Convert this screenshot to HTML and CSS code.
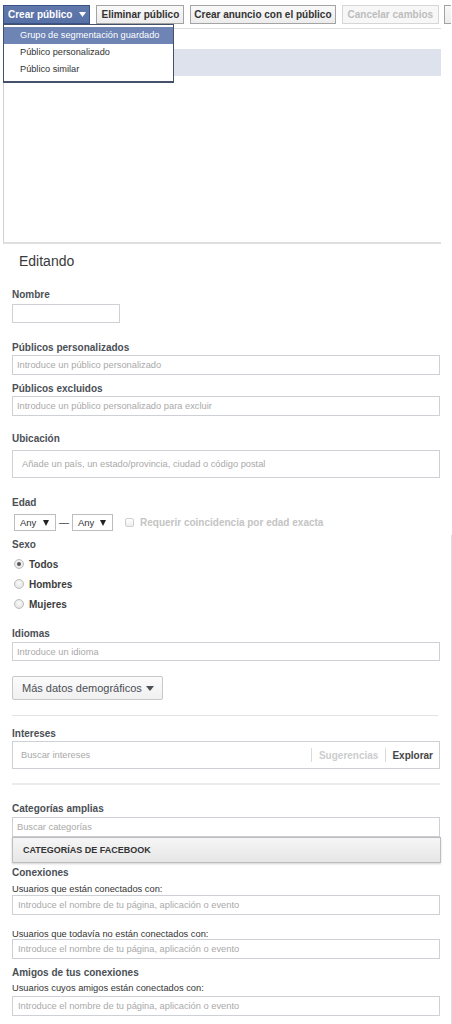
FILE: index.html
```html
<!DOCTYPE html>
<html lang="es">
<head>
<meta charset="utf-8">
<title>Editando público</title>
<link rel="stylesheet" href="styles.css">
</head>
<body>
<div class="page">
  <div class="main">
    <div class="toolbar">
      <button class="btn btn-primary">Crear público <svg class="caret" width="7" height="5" viewBox="0 0 7 5"><path d="M0 0H7L3.5 5Z" fill="#fff"/></svg></button>
      <button class="btn">Eliminar público</button>
      <button class="btn btn-narrow">Crear anuncio con el público</button>
      <button class="btn btn-disabled">Cancelar cambios</button>
      <button class="btn btn-more" aria-label="Más opciones"></button>
    </div>
    <ul class="menu">
      <li class="menu-item is-active">Grupo de segmentación guardado</li>
      <li class="menu-item">Público personalizado</li>
      <li class="menu-item">Público similar</li>
    </ul>
    <div class="panel"><div class="band"></div></div>

    <h2 class="title">Editando</h2>

    <div class="form">
      <div class="label label-name">Nombre</div>
      <input class="input input-name" type="text">

      <div class="label label-custom">Públicos personalizados</div>
      <input class="input input-wide input-tight" type="text" placeholder="Introduce un público personalizado">

      <div class="label label-excluded">Públicos excluidos</div>
      <input class="input input-wide input-tight" type="text" placeholder="Introduce un público personalizado para excluir">

      <div class="label label-location">Ubicación</div>
      <input class="input input-wide input-location" type="text" placeholder="Añade un país, un estado/provincia, ciudad o código postal">

      <div class="label label-age">Edad</div>
      <div class="age-row">
        <div class="select select-from">Any <svg class="select-arrow" width="6" height="6" viewBox="0 0 6 6"><path d="M0 0H6L3 6Z" fill="#222"/></svg></div>
        <span class="dash">—</span>
        <div class="select select-to">Any <svg class="select-arrow" width="6" height="6" viewBox="0 0 6 6"><path d="M0 0H6L3 6Z" fill="#222"/></svg></div>
        <span class="checkbox"></span>
        <span class="check-label">Requerir coincidencia por edad exacta</span>
      </div>

      <div class="label label-sex">Sexo</div>
      <div class="radios">
        <div class="radio-row"><span class="radio is-checked"></span><span class="radio-text">Todos</span></div>
        <div class="radio-row"><span class="radio"></span><span class="radio-text">Hombres</span></div>
        <div class="radio-row"><span class="radio"></span><span class="radio-text">Mujeres</span></div>
      </div>

      <div class="label label-lang">Idiomas</div>
      <input class="input input-wide input-lang" type="text" placeholder="Introduce un idioma">

      <button class="more-btn">Más datos demográficos <svg class="more-caret" width="8" height="5" viewBox="0 0 8 5"><path d="M0 0H8L4 5Z" fill="#4b4f56"/></svg></button>

      <div class="rule rule-thin"></div>

      <div class="label label-interests">Intereses</div>
      <div class="interests">
        <span class="interests-ph">Buscar intereses</span>
        <span class="divider"></span>
        <span class="suggest">Sugerencias</span>
        <span class="divider"></span>
        <span class="explore">Explorar</span>
      </div>

      <div class="rule rule-thick"></div>

      <div class="label label-cats">Categorías amplias</div>
      <input class="input input-wide input-cats" type="text" placeholder="Buscar categorías">
      <div class="fb-bar">CATEGORÍAS DE FACEBOOK</div>

      <div class="label label-conn">Conexiones</div>
      <div class="sub sub-first">Usuarios que están conectados con:</div>
      <input class="input input-wide input-conn" type="text" placeholder="Introduce el nombre de tu página, aplicación o evento">
      <div class="sub sub-next">Usuarios que todavía no están conectados con:</div>
      <input class="input input-wide input-conn" type="text" placeholder="Introduce el nombre de tu página, aplicación o evento">

      <div class="label label-friends">Amigos de tus conexiones</div>
      <div class="sub sub-friends">Usuarios cuyos amigos están conectados con:</div>
      <input class="input input-wide input-friends" type="text" placeholder="Introduce el nombre de tu página, aplicación o evento">
    </div>
  </div>
  <div class="side"></div>
</div>
</body>
</html>
```

FILE: styles.css
```css
* { box-sizing: border-box; }

html, body {
  margin: 0;
  padding: 0;
  background: #fff;
  overflow: hidden;
}

body {
  font-family: "Liberation Sans", Arial, sans-serif;
  color: #333;
}

.page {
  display: flex;
  width: 452px;
  min-height: 1024px;
}

.main {
  position: relative;
  width: 451px;
  flex: none;
}

.side {
  width: 1px;
  margin-top: 535px;
  background: #dcdcdc;
}

/* toolbar */
.toolbar {
  display: flex;
  gap: 6px;
  padding: 5px 0 0 3px;
  height: 24px;
  overflow: hidden;
  white-space: nowrap;
}

.btn {
  flex: none;
  height: 19px;
  padding: 0 4px;
  border: 1px solid #a3a3a3;
  background: linear-gradient(#f9f9f9, #ececec);
  font: bold 10px/17px "Liberation Sans", Arial, sans-serif;
  color: #333;
  display: flex;
  align-items: center;
  gap: 7px;
}

.btn-primary {
  background: linear-gradient(#6178ab, #5770a6);
  border-color: #3b5288;
  color: #fff;
  padding: 0 3px 0 4px;
}

.btn-narrow { padding: 0 3px; }

.btn-disabled {
  border-color: #d6d6d6;
  background: #f7f7f7;
  color: #bdbdbd;
  padding: 0 5px;
}

.btn-more {
  width: 40px;
  margin-left: -1px;
}

.caret { display: block; }

/* dropdown */
.menu {
  position: absolute;
  left: 3px;
  top: 24px;
  width: 171px;
  margin: 0;
  padding: 2px 0 3px;
  list-style: none;
  background: #fff;
  border: 1px solid #45506a;
  border-bottom-width: 2px;
  z-index: 2;
}

.menu-item {
  height: 17px;
  padding-left: 16px;
  font: 9.2px/17px "Liberation Sans", Arial, sans-serif;
  color: #333;
}

.menu-item.is-active {
  background: #6d84b4;
  color: #fff;
}

/* panel */
.panel {
  margin: 4px 0 0 3px;
  width: 438px;
  height: 216px;
  border-top: 1px solid #dedede;
  border-left: 1px solid #d2d2d2;
  border-bottom: 2px solid #dfdfdf;
}

.band {
  margin-top: 20px;
  height: 27px;
  background: #dde2ec;
}

.title {
  margin: 9px 0 0 19px;
  font: 14px/17px "Liberation Sans", Arial, sans-serif;
  color: #3a3a3a;
}

/* form */
.form {
  padding-left: 12px;
  width: 440px;
}

.label {
  font: bold 10px/12px "Liberation Sans", Arial, sans-serif;
  color: #4b4f56;
}

.label-name { margin-top: 19px; margin-bottom: 3px; }
.label-custom { margin-top: 19px; margin-bottom: 1px; }
.label-excluded { margin-top: 8px; margin-bottom: 1px; }
.label-location { margin-top: 17px; margin-bottom: 5px; }
.label-age { margin-top: 19px; margin-bottom: 4px; }
.label-sex { margin-top: 7px; margin-bottom: 3px; }
.label-lang { margin-top: 14px; margin-bottom: 2px; }
.label-interests { margin-top: 12px; margin-bottom: 1px; }
.label-cats { margin-top: 18px; margin-bottom: 2px; }
.label-conn { margin-top: 4px; }
.label-friends { margin-top: 8px; }

.input {
  display: block;
  margin: 0;
  height: 20px;
  padding: 0 4px;
  border: 1px solid #cdd0d5;
  border-radius: 0;
  background: #fff;
  font: 9.3px "Liberation Sans", Arial, sans-serif;
  color: #333;
  outline: none;
}

.input::placeholder { color: #a9a9a9; }

.input-name { width: 108px; height: 19px; }
.input-wide { width: 428px; }
.input-location { height: 28px; padding-left: 9px; }
.input-lang { height: 19px; }
.input-conn, .input-friends { padding-left: 5px; }

/* age */
.age-row {
  display: flex;
  align-items: center;
  height: 19px;
}

.select {
  display: flex;
  align-items: center;
  height: 17px;
  padding: 0 6px 0 5px;
  border: 1px solid #bdbdbd;
  font: 9.5px "Liberation Sans", Arial, sans-serif;
  color: #333;
}

.select-from { margin-left: 2px; width: 42px; }
.select-to { width: 41px; }
.select-arrow { margin-left: auto; }

.dash {
  width: 16px;
  text-align: center;
  font: 10px "Liberation Sans", Arial, sans-serif;
  color: #444;
}

.checkbox {
  margin-left: 12px;
  width: 9px;
  height: 9px;
  border: 1px solid #cfcfcf;
  border-radius: 2px;
  background: linear-gradient(#fff, #eee);
}

.check-label {
  margin-left: 6px;
  font: bold 10px "Liberation Sans", Arial, sans-serif;
  color: #c4c4c4;
}

/* radios */
.radio-row {
  display: flex;
  align-items: center;
  height: 20px;
  padding-left: 2px;
}

.radio {
  width: 10px;
  height: 10px;
  border-radius: 50%;
  border: 1px solid #bcbcbc;
  background: radial-gradient(circle at 50% 40%, #fafafa, #dedede);
  position: relative;
}

.radio.is-checked::after {
  content: "";
  position: absolute;
  left: 2px;
  top: 2px;
  width: 4px;
  height: 4px;
  border-radius: 50%;
  background: #555;
}

.radio-text {
  margin-left: 5px;
  font: bold 10px "Liberation Sans", Arial, sans-serif;
  color: #3d3d3d;
}

/* more button */
.more-btn {
  display: flex;
  align-items: center;
  margin-top: 15px;
  width: 151px;
  height: 24px;
  padding: 0 0 0 9px;
  border: 1px solid #c8c8c8;
  border-radius: 2px;
  background: linear-gradient(#fbfbfb, #f0f0f0);
  font: 11px "Liberation Sans", Arial, sans-serif;
  color: #4b4f56;
}

.more-caret { margin-left: 4px; }

.rule { margin: 0; }
.rule-thin {
  margin-top: 15px;
  width: 426px;
  height: 1px;
  background: #e3e3e3;
}
.rule-thick {
  margin-top: 14px;
  width: 428px;
  height: 2px;
  background: #ececec;
}

/* interests */
.interests {
  display: flex;
  align-items: center;
  width: 428px;
  height: 28px;
  border: 1px solid #cdd0d5;
}

.interests-ph {
  flex: 1;
  padding-left: 8px;
  font: 9.3px "Liberation Sans", Arial, sans-serif;
  color: #a9a9a9;
}

.divider {
  width: 1px;
  height: 14px;
  background: #dadada;
}

.suggest {
  padding: 0 7px;
  font: bold 10px "Liberation Sans", Arial, sans-serif;
  color: #cdcdcd;
}

.explore {
  padding: 0 6px 0 6px;
  font: bold 10px "Liberation Sans", Arial, sans-serif;
  color: #454545;
}

/* categories */
.fb-bar {
  width: 429px;
  height: 26px;
  padding-left: 10px;
  border: 1px solid #bdbdbd;
  background: linear-gradient(#f6f6f6, #e6e6e6);
  box-shadow: 0 1px 2px rgba(0, 0, 0, 0.18);
  font: bold 9px/24px "Liberation Sans", Arial, sans-serif;
  color: #333;
}

/* connections */
.sub {
  font: 9.3px/12px "Liberation Sans", Arial, sans-serif;
  color: #333;
}

.sub-first { margin-top: 4px; }
.sub-next { margin-top: 13px; margin-bottom: -1px; }
.sub-friends { margin-top: 3px; margin-bottom: 2px; }
```
